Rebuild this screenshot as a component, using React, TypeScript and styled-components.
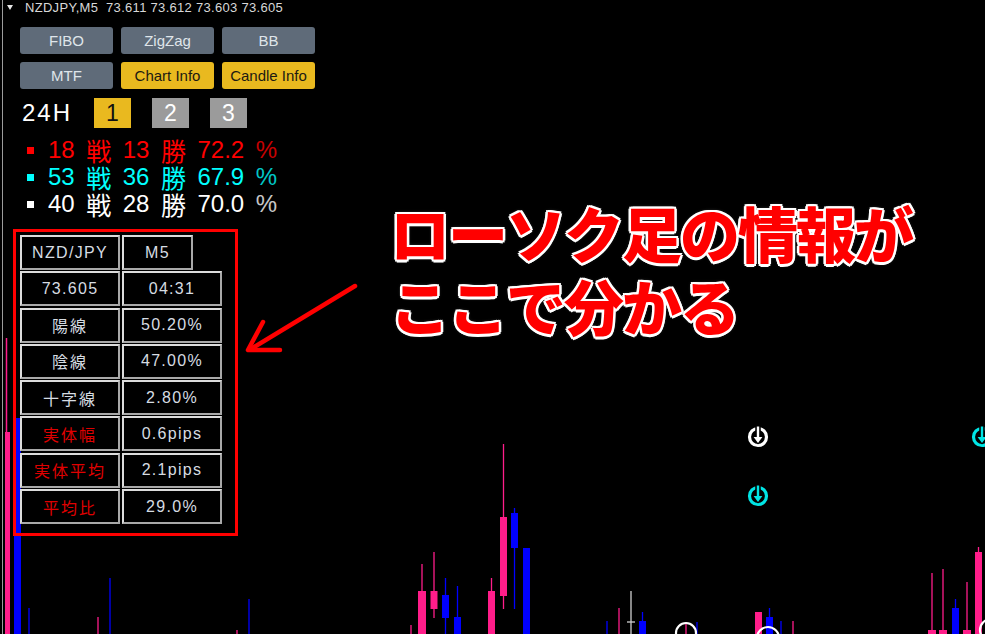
import React from "react";
import styled, { createGlobalStyle } from "styled-components";

const GlobalStyle = createGlobalStyle`
  html, body {
    margin: 0;
    padding: 0;
    background: #000;
  }
  body {
    font-family: "Liberation Sans", Arial, sans-serif;
  }
`;

const JP = `"Noto Sans CJK JP", "Noto Sans", sans-serif`;

const Screen = styled.div`
  position: relative;
  width: 985px;
  height: 634px;
  background: #000;
  overflow: hidden;
`;

const Chart = styled.svg`
  position: absolute;
  inset: 0;
`;

const Panel = styled.div`
  position: relative;
  display: flex;
  flex-direction: column;
  align-items: flex-start;
`;

const TitleBar = styled.div`
  display: flex;
  align-items: center;
  height: 15px;
  padding-left: 7px;
  color: #d8d8d8;
  font-size: 13px;
  letter-spacing: 0.3px;
  white-space: pre;
`;

const Caret = styled.span`
  width: 0;
  height: 0;
  border-left: 3.5px solid transparent;
  border-right: 3.5px solid transparent;
  border-top: 5px solid #e6e6e6;
  margin-right: 12px;
`;

const ButtonGrid = styled.div`
  margin: 12px 0 0 20px;
  display: grid;
  grid-template-columns: repeat(3, 93px);
  grid-auto-rows: 27px;
  gap: 8px;
`;

const ToolButton = styled.div<{ $gold?: boolean }>`
  display: flex;
  align-items: center;
  justify-content: center;
  border-radius: 3px;
  font-size: 15px;
  background: ${({ $gold }) => ($gold ? "#e9b91f" : "#5f6b79")};
  color: ${({ $gold }) => ($gold ? "#1c1a12" : "#dfe5ea")};
`;

const TimeRow = styled.div`
  margin: 9px 0 0 22px;
  display: flex;
  align-items: center;
  height: 30px;
`;

const TimeLabel = styled.span`
  width: 72px;
  color: #fff;
  font-size: 24px;
  letter-spacing: 2px;
`;

const PeriodBox = styled.div<{ $active?: boolean }>`
  width: 37px;
  height: 30px;
  margin-right: 21px;
  display: flex;
  align-items: center;
  justify-content: center;
  font-size: 23px;
  background: ${({ $active }) => ($active ? "#e9b91f" : "#9b9b9b")};
  color: ${({ $active }) => ($active ? "#111" : "#fff")};
`;

const StatsList = styled.div`
  margin-top: 8.5px;
  display: flex;
  flex-direction: column;
`;

const StatRow = styled.div<{ $color: string }>`
  display: flex;
  align-items: center;
  gap: 11.5px;
  height: 27px;
  padding-left: 27px;
  color: ${({ $color }) => $color};
  line-height: 1;
`;

const Marker = styled.span`
  width: 7px;
  height: 7px;
  background: currentColor;
  margin-right: 2.5px;
`;

const Num = styled.span`
  font-size: 24px;
  line-height: 1;
`;

const Kanji = styled.span`
  font-family: ${JP};
  font-size: 25px;
  line-height: 1;
`;

const Percent = styled.span`
  font-size: 24px;
  line-height: 1;
  opacity: 0.78;
`;

const InfoFrame = styled.div`
  margin: 11.5px 0 0 13px;
  width: 225px;
  height: 307px;
  box-sizing: border-box;
  border: 3px solid #ff0000;
  padding: 3px 0 0 4px;
`;

const InfoGrid = styled.div`
  display: grid;
  grid-template-columns: 100px 100px;
  grid-auto-rows: 35px;
  column-gap: 2px;
  row-gap: 1.3px;
`;

const Cell = styled.div<{ $red?: boolean; $narrow?: boolean; $jp?: boolean }>`
  box-sizing: border-box;
  width: ${({ $narrow }) => ($narrow ? "71px" : "100px")};
  display: flex;
  align-items: center;
  justify-content: center;
  background: #000;
  border: 2px solid #dcdcdc;
  border-right-color: #a9a9a9;
  border-bottom-color: #a9a9a9;
  font-family: ${({ $jp }) => ($jp ? JP : `"Liberation Sans", Arial, sans-serif`)};
  font-size: 16px;
  letter-spacing: ${({ $jp }) => ($jp ? "2px" : "1.3px")};
  color: ${({ $red }) => ($red ? "#e00000" : "#d6dce2")};
`;

const Annotation = styled.div`
  position: absolute;
  left: 390px;
  top: 195px;
  font-family: ${JP};
  font-weight: 900;
  font-size: 60px;
  line-height: 73px;
  letter-spacing: -2px;
  color: #ff0000;
  white-space: pre;
  text-shadow:
    2.5px 0 #fff, -2.5px 0 #fff, 0 2.5px #fff, 0 -2.5px #fff,
    1.8px 1.8px #fff, -1.8px 1.8px #fff, 1.8px -1.8px #fff, -1.8px -1.8px #fff,
    0 0 4px #777;
`;

const Pointer = styled.svg`
  position: absolute;
  left: 0;
  top: 0;
  pointer-events: none;
`;

const PINK = "#ff1d8a";
const BLUE = "#0000ff";

type Candle = {
  x: number;
  w?: number;
  top?: number;
  bottom?: number;
  wickTop?: number;
  wickBottom?: number;
  color: string;
};

const candles: Candle[] = [
  { x: 29, wickTop: 608, color: BLUE },
  { x: 98, wickTop: 617, color: PINK },
  { x: 110, wickTop: 578, color: BLUE },
  { x: 237, wickTop: 630, color: PINK },
  { x: 249, wickTop: 599, color: BLUE },
  { x: 411, wickTop: 625, color: PINK },
  { x: 422, w: 8, top: 591, bottom: 634, wickTop: 564, color: PINK },
  { x: 434, w: 7, top: 591, bottom: 609, wickTop: 552, wickBottom: 618, color: PINK },
  { x: 445.5, w: 7, top: 595, bottom: 618, wickTop: 578, color: BLUE },
  { x: 457.5, w: 7, top: 617, bottom: 634, wickTop: 586, color: BLUE },
  { x: 491.5, w: 7, top: 591, bottom: 634, wickTop: 578, color: PINK },
  { x: 503.5, w: 7, top: 517, bottom: 596, wickTop: 444, wickBottom: 609, color: PINK },
  { x: 514.5, w: 7, top: 513, bottom: 548, wickTop: 508, wickBottom: 609, color: BLUE },
  { x: 526.5, w: 7, top: 548, bottom: 634, color: BLUE },
  { x: 607, wickTop: 621, color: BLUE },
  { x: 619, wickTop: 608, color: PINK },
  { x: 631, wickTop: 591, color: "#d0d0d0" },
  { x: 642.5, w: 7, top: 621, bottom: 634, wickTop: 612, color: BLUE },
  { x: 686, wickTop: 624, color: PINK },
  { x: 697, wickTop: 622, color: BLUE },
  { x: 758.5, w: 7, top: 612, bottom: 634, color: PINK },
  { x: 769.5, w: 7, top: 617, bottom: 634, wickTop: 608, color: BLUE },
  { x: 781, wickTop: 621, color: BLUE },
  { x: 793, wickTop: 621, color: PINK },
  { x: 932, w: 8, top: 630, bottom: 634, wickTop: 573, color: PINK },
  { x: 943, w: 8, top: 630, bottom: 634, wickTop: 569, color: PINK },
  { x: 955.5, w: 7, top: 608, bottom: 634, wickTop: 599, color: BLUE },
  { x: 967, w: 8, top: 630, bottom: 634, wickTop: 582, color: PINK },
  { x: 978.5, w: 7, top: 552, bottom: 634, wickTop: 547, color: PINK },
];

function DownMark({ x, y, color }: { x: number; y: number; color: string }) {
  return (
    <g transform={`translate(${x} ${y})`}>
      <circle r="8.5" fill="none" stroke={color} strokeWidth="3.2" />
      <path d="M0 -12 V2" stroke="#000" strokeWidth="5.5" />
      <path d="M-6.5 -1 L0 7.5 L6.5 -1 Z" fill="#000" />
      <path d="M0 -10.5 V1" stroke={color} strokeWidth="2.4" />
      <path d="M-4.4 0 L0 6 L4.4 0 Z" fill={color} />
    </g>
  );
}

function ChartLayer() {
  return (
    <Chart width="985" height="634" viewBox="0 0 985 634">
      <line x1="2.5" y1="0" x2="2.5" y2="634" stroke="#9c9c9c" strokeWidth="1" />
      <line x1="6.5" y1="338" x2="6.5" y2="634" stroke={PINK} strokeWidth="1.5" />
      <rect x="5" y="432" width="5" height="202" fill={PINK} />
      <rect x="14" y="418" width="7" height="216" fill={BLUE} />
      {candles.map((c, i) => (
        <g key={i}>
          {c.wickTop !== undefined && (
            <line
              x1={c.x}
              x2={c.x}
              y1={c.wickTop}
              y2={c.wickBottom ?? 634}
              stroke={c.color}
              strokeWidth="1.3"
            />
          )}
          {c.w !== undefined && (
            <rect
              x={c.x - c.w / 2}
              y={c.top}
              width={c.w}
              height={(c.bottom ?? 634) - (c.top ?? 0)}
              fill={c.color}
            />
          )}
        </g>
      ))}
      <line x1="627" y1="622" x2="635" y2="622" stroke="#d0d0d0" strokeWidth="1.3" />
      <circle cx="686" cy="633" r="10" fill="none" stroke="#fff" strokeWidth="2.2" />
      <circle cx="768" cy="638" r="11" fill="none" stroke="#fff" strokeWidth="2.2" />
      <circle cx="991" cy="630" r="11" fill="none" stroke="#fff" strokeWidth="2.2" />
      <DownMark x={758} y={437} color="#ffffff" />
      <DownMark x={758} y={496} color="#00e5e5" />
      <DownMark x={982} y={437} color="#00e5e5" />
    </Chart>
  );
}

const buttons = [
  { label: "FIBO" },
  { label: "ZigZag" },
  { label: "BB" },
  { label: "MTF" },
  { label: "Chart Info", gold: true },
  { label: "Candle Info", gold: true },
];

const stats = [
  { color: "#ff0000", games: "18", wins: "13", rate: "72.2" },
  { color: "#00ffff", games: "53", wins: "36", rate: "67.9" },
  { color: "#ffffff", games: "40", wins: "28", rate: "70.0" },
];

const infoRows: { label: string; value: string; jp?: boolean; red?: boolean }[] = [
  { label: "73.605", value: "04:31" },
  { label: "陽線", value: "50.20%", jp: true },
  { label: "陰線", value: "47.00%", jp: true },
  { label: "十字線", value: "2.80%", jp: true },
  { label: "実体幅", value: "0.6pips", jp: true, red: true },
  { label: "実体平均", value: "2.1pips", jp: true, red: true },
  { label: "平均比", value: "29.0%", jp: true, red: true },
];

export default function App() {
  return (
    <>
      <GlobalStyle />
      <Screen>
        <ChartLayer />
        <Panel>
          <TitleBar>
            <Caret />
            NZDJPY,M5  73.611 73.612 73.603 73.605
          </TitleBar>
          <ButtonGrid>
            {buttons.map((b) => (
              <ToolButton key={b.label} $gold={b.gold}>
                {b.label}
              </ToolButton>
            ))}
          </ButtonGrid>
          <TimeRow>
            <TimeLabel>24H</TimeLabel>
            <PeriodBox $active>1</PeriodBox>
            <PeriodBox>2</PeriodBox>
            <PeriodBox>3</PeriodBox>
          </TimeRow>
          <StatsList>
            {stats.map((s) => (
              <StatRow key={s.color} $color={s.color}>
                <Marker />
                <Num>{s.games}</Num>
                <Kanji>戦</Kanji>
                <Num>{s.wins}</Num>
                <Kanji>勝</Kanji>
                <Num>{s.rate}</Num>
                <Percent>%</Percent>
              </StatRow>
            ))}
          </StatsList>
          <InfoFrame>
            <InfoGrid>
              <Cell>NZD/JPY</Cell>
              <Cell $narrow>M5</Cell>
              {infoRows.map((r) => (
                <React.Fragment key={r.label}>
                  <Cell $jp={r.jp} $red={r.red}>
                    {r.label}
                  </Cell>
                  <Cell>{r.value}</Cell>
                </React.Fragment>
              ))}
            </InfoGrid>
          </InfoFrame>
        </Panel>
        <Pointer width="985" height="634" viewBox="0 0 985 634">
          <g stroke="#ff0000" strokeWidth="4.5" strokeLinecap="round" strokeLinejoin="round" fill="none">
            <line x1="355" y1="286" x2="251" y2="349" />
            <polyline points="263,322 248,350 280,350" />
          </g>
        </Pointer>
        <Annotation>{"ローソク足の情報が\nここで分かる"}</Annotation>
      </Screen>
    </>
  );
}
